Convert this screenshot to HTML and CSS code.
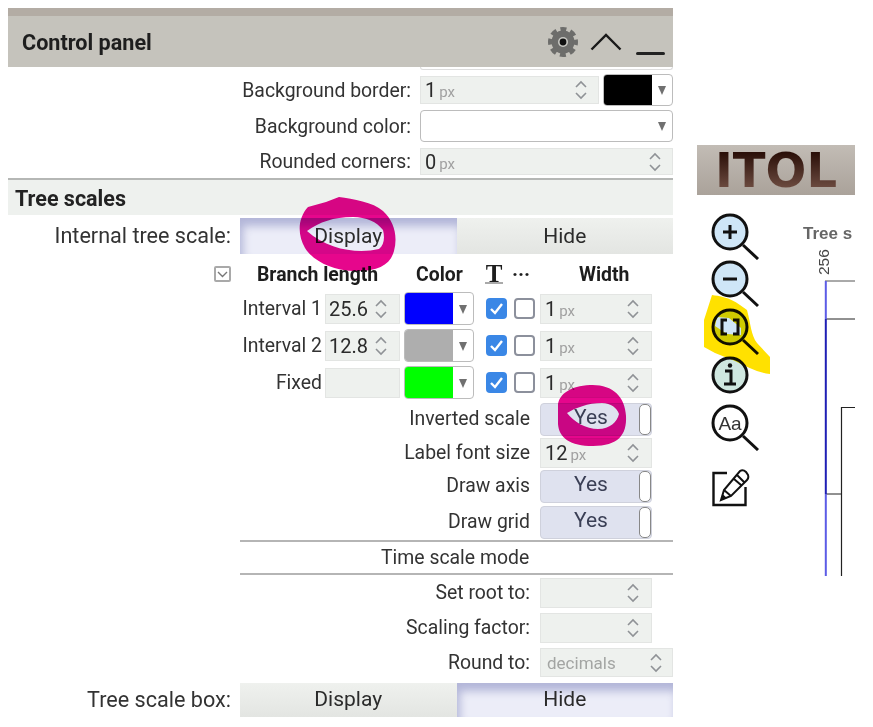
FILE: index.html
```html
<!DOCTYPE html>
<html lang="en">
<head>
<meta charset="utf-8">
<title>Control panel</title>
<link rel="stylesheet" href="styles.css">
</head>
<body>
<svg class="defs" width="0" height="0" aria-hidden="true">
  <symbol id="spin" viewBox="0 0 14 24"><path d="M2 9 L7 4 L12 9 M2 15 L7 20 L12 15" fill="none" stroke="#8f9296" stroke-width="1.6"/></symbol>
  <symbol id="tick" viewBox="0 0 21 21"><path d="M5 11 L9 15 L16 6" fill="none" stroke="#fff" stroke-width="2.4"/></symbol>
</svg>
<div class="page">
  <main class="panel">
    <header class="panel-head">
      <h1 class="panel-title">Control panel</h1>
      <div class="head-tools">
        <svg class="gear" width="32" height="32" viewBox="0 0 32 32"><circle cx="16" cy="16" r="11.500" fill="#6d6d6b"/><circle cx="16" cy="16" r="12.500" fill="none" stroke="#6d6d6b" stroke-width="5" stroke-dasharray="5.8 4.02" stroke-dashoffset="2.900"/><circle cx="16" cy="16" r="5" fill="#c9c9c4"/><circle cx="16" cy="16" r="3.400" fill="#111"/></svg>
        <svg class="caret" width="32" height="18" viewBox="0 0 32 18"><path d="M1.500 16.500 L16 2 L30.500 16.500" fill="none" stroke="#1a1a1a" stroke-width="2.400"/></svg>
        <span class="minimize"></span>
      </div>
    </header>
    <div class="clipped"></div>

    <div class="row r-border">
      <label class="lab lab-wide">Background border:</label>
      <div class="field f-border"><span class="val">1<small>px</small></span><svg class="spin"><use href="#spin"/></svg></div>
      <div class="swatch sw-top"><span class="chip chip-black"></span></div>
    </div>
    <div class="row r-bgcolor">
      <label class="lab lab-wide">Background color:</label>
      <div class="swatch sw-full"></div>
    </div>
    <div class="row r-rounded">
      <label class="lab lab-wide">Rounded corners:</label>
      <div class="field f-full"><span class="val">0<small>px</small></span><svg class="spin"><use href="#spin"/></svg></div>
    </div>

    <h2 class="section">Tree scales</h2>

    <div class="row r-seg r-seg-top">
      <label class="lab lab-big">Internal tree scale:</label>
      <div class="seg">
        <span class="seg-btn on">Display</span>
        <span class="seg-btn">Hide</span>
      </div>
    </div>

    <div class="row r-heads">
      <span class="collapse"><svg width="11" height="7" viewBox="0 0 11 7"><path d="M1 1 L5.500 5.500 L10 1" fill="none" stroke="#777" stroke-width="1.400"/></svg></span>
      <span class="hd hd-branch">Branch length</span>
      <span class="hd hd-color">Color</span>
      <span class="hd-t">T</span>
      <span class="hd-dots">···</span>
      <span class="hd hd-width">Width</span>
    </div>

    <div class="row r-int">
      <label class="lab lab-int">Interval 1</label>
      <div class="field f-int"><span class="val">25.6</span><svg class="spin"><use href="#spin"/></svg></div>
      <div class="swatch sw-int"><span class="chip chip-blue"></span></div>
      <span class="check on"><svg width="21" height="21"><use href="#tick"/></svg></span>
      <span class="check"></span>
      <div class="field f-width"><span class="val">1<small>px</small></span><svg class="spin"><use href="#spin"/></svg></div>
    </div>
    <div class="row r-int">
      <label class="lab lab-int">Interval 2</label>
      <div class="field f-int"><span class="val">12.8</span><svg class="spin"><use href="#spin"/></svg></div>
      <div class="swatch sw-int"><span class="chip chip-gray"></span></div>
      <span class="check on"><svg width="21" height="21"><use href="#tick"/></svg></span>
      <span class="check"></span>
      <div class="field f-width"><span class="val">1<small>px</small></span><svg class="spin"><use href="#spin"/></svg></div>
    </div>
    <div class="row r-int">
      <label class="lab lab-int">Fixed</label>
      <div class="field f-int"></div>
      <div class="swatch sw-int"><span class="chip chip-green"></span></div>
      <span class="check on"><svg width="21" height="21"><use href="#tick"/></svg></span>
      <span class="check"></span>
      <div class="field f-width"><span class="val">1<small>px</small></span><svg class="spin"><use href="#spin"/></svg></div>
    </div>

    <div class="row r-tog">
      <label class="lab lab-mid">Inverted scale</label>
      <div class="toggle"><span class="toggle-text">Yes</span><span class="knob"></span></div>
    </div>
    <div class="row r-font">
      <label class="lab lab-mid">Label font size</label>
      <div class="field f-width"><span class="val">12<small>px</small></span><svg class="spin"><use href="#spin"/></svg></div>
    </div>
    <div class="row r-tog r-tog-next">
      <label class="lab lab-mid">Draw axis</label>
      <div class="toggle"><span class="toggle-text">Yes</span><span class="knob"></span></div>
    </div>
    <div class="row r-tog r-tog-next">
      <label class="lab lab-mid">Draw grid</label>
      <div class="toggle"><span class="toggle-text">Yes</span><span class="knob"></span></div>
    </div>

    <div class="subhead"><span>Time scale mode</span></div>

    <div class="row r-time r-root">
      <label class="lab lab-mid">Set root to:</label>
      <div class="field f-width"><span class="val"></span><svg class="spin"><use href="#spin"/></svg></div>
    </div>
    <div class="row r-time r-scale">
      <label class="lab lab-mid">Scaling factor:</label>
      <div class="field f-width"><span class="val"></span><svg class="spin"><use href="#spin"/></svg></div>
    </div>
    <div class="row r-time r-round">
      <label class="lab lab-mid">Round to:</label>
      <div class="field f-round"><span class="val val-ph">decimals</span><svg class="spin"><use href="#spin"/></svg></div>
    </div>

    <div class="row r-seg r-seg-box">
      <label class="lab lab-big">Tree scale box:</label>
      <div class="seg">
        <span class="seg-btn">Display</span>
        <span class="seg-btn on">Hide</span>
      </div>
    </div>

    <svg class="scribble" width="665" height="708" viewBox="0 0 665 708" aria-hidden="true">
      <path fill-rule="evenodd" fill="#e6068c" d="M331 189 C345 191 365 194 375 203 C386 213 390 228 386 243 C382 258 368 264 345 263 C325 262 306 254 297 240 C289 226 290 210 300 199 L318 194 Z M299 223 C312 214 325 209 345 209 C358 209 369 214 375 222 C377 230 376 237 371 241 C350 246 320 242 299 223 Z"/>
      <path fill-rule="evenodd" fill="#e6068c" d="M550 396 C552 386 562 378 582 377 C604 376 617 388 618 408 C619 427 610 438 585 438 C562 438 551 430 550 416 Z M559 405 C567 400 580 395 594 395 C603 395 609 400 611 406 C609 414 602 421 590 421 C578 421 566 414 559 405 Z"/>
    </svg>
  </main>

  <aside class="side">
    <div class="logo"><span class="logo-text">ITOL</span></div>
    <div class="tools">
      <div class="icons">
        <svg class="ico ico-zoom" width="50" height="47" viewBox="0 0 50 47"><path d="M33 32 L48 46" stroke="#111" stroke-width="3"/><circle cx="20" cy="19" r="17" fill="#cfe6f7" stroke="#111" stroke-width="3"/><path d="M13 19 H27 M20 12 V26" stroke="#111" stroke-width="3"/></svg>
        <svg class="ico ico-zoom" width="50" height="48" viewBox="0 0 50 48"><path d="M33 32 L48 46" stroke="#111" stroke-width="3"/><circle cx="20" cy="19" r="17" fill="#cfe6f7" stroke="#111" stroke-width="3"/><path d="M13 19 H27" stroke="#111" stroke-width="3"/></svg>
        <svg class="ico ico-zoom" width="50" height="48" viewBox="0 0 50 48"><path d="M33 32 L48 46" stroke="#111" stroke-width="3"/><circle cx="20" cy="19" r="17" fill="#cfe6f7" stroke="#111" stroke-width="3"/><path d="M17 12 H12 V26 H17 M23 12 H28 V26 H23" fill="none" stroke="#111" stroke-width="3"/></svg>
        <svg class="ico ico-zoom" width="50" height="48" viewBox="0 0 50 48"><circle cx="20" cy="19" r="17" fill="#cfe7e0" stroke="#111" stroke-width="3"/><circle cx="20" cy="9.500" r="2.200" fill="#111"/><path d="M15 15 H21 V28 M14 28 H26" fill="none" stroke="#111" stroke-width="3"/></svg>
        <svg class="ico ico-zoom" width="50" height="47" viewBox="0 0 50 47"><path d="M33 32 L48 46" stroke="#111" stroke-width="3"/><circle cx="20" cy="19" r="17" fill="#fff" stroke="#111" stroke-width="3"/><text class="aa" x="20" y="25.500" text-anchor="middle">Aa</text></svg>
        <svg class="ico ico-edit" width="40" height="40" viewBox="0 0 40 40"><path d="M17 5 H3.500 V37 H35.500 V19" fill="none" stroke="#111" stroke-width="2.400"/><path d="M11 32 L14 22 L30 3 Q33 1 36 4 L38 7 Q39 10 37 12 L21 28 Z M14 22 L21 28 M27 7 L34 14 M24 11 L31 17" fill="#fff" stroke="#111" stroke-width="2"/><path d="M11 32 L12.500 26 L17 30 Z" fill="#111"/></svg>
        <svg class="marker" width="70" height="80" viewBox="0 0 70 80" aria-hidden="true"><path fill="#ffe100" fill-rule="evenodd" d="M15 0 C22 1 32 2 43 10 L50 15 C54 30 54 40 60 48 L73 62 L73 79 C62 78 50 72 38 66 L18 58 L7 52 L7 25 Z M18 31 L30 39 L44 40 L44 33 L32 23 L20 22 Z"/></svg>
      </div>
      <svg class="tree" width="52" height="363" viewBox="0 0 52 363">
        <text class="tree-title" x="0" y="26">Tree s</text>
        <text class="tree-num" transform="translate(26 62) rotate(-90)">256</text>
        <path d="M22 68 H52" stroke="#555" stroke-width="1" fill="none"/>
        <path d="M22 106 H52" stroke="#222" stroke-width="1" fill="none"/>
        <path d="M22 281 H38" stroke="#222" stroke-width="1" fill="none"/>
        <path d="M38.500 363 V194.500 H52" stroke="#222" stroke-width="1.200" fill="none"/>
        <path d="M22.800 68 V106 M22.800 281 V363" stroke="#5c5ce6" stroke-width="2" fill="none"/>
        <path d="M22.800 106 V281" stroke="#1f1fb5" stroke-width="2" fill="none"/>
      </svg>
    </div>
  </aside>
</div>
</body>
</html>
```
FILE: styles.css
```css
* { box-sizing: border-box; }
html, body { height: 100%; }
body {
  margin: 8px 8px 0;
  overflow: hidden;
  background: #fff;
  color: #333;
  font-family: Roboto, "Liberation Sans", sans-serif;
  font-size: 19.4px;
}
.defs { position: absolute; }
.page { display: flex; gap: 24px; align-items: flex-start; }

/* panel */
.panel { position: relative; width: 665px; flex: none; }
.panel-head {
  height: 59px;
  display: flex;
  align-items: center;
  padding: 9px 8px 0 14px;
  background: linear-gradient(#b3aca4 0, #b3aca4 8px, #c5c3bc 8px);
}
.panel-title { margin: 0; font-size: 21.600px; font-weight: 700; color: #1e1e1e; }
.head-tools { margin-left: auto; margin-top: -1px; display: flex; align-items: center; }
.gear { margin-right: 11px; }
.caret { margin-right: 14px; }
.minimize { width: 29px; height: 3px; margin-top: 24px; background: #222; border-radius: 2px; }
.clipped { height: 3px; margin-left: 412px; border: 1px solid #ddd; border-top: 0; border-radius: 0 0 4px 4px; }

.row { display: flex; align-items: center; }
.lab { flex: none; text-align: right; white-space: nowrap; }
.lab-wide { width: 403px; margin-right: 9px; }
.lab-big { width: 223px; margin-right: 9px; font-size: 21.600px; padding-bottom: 2px; }
.lab-mid { width: 522px; margin-right: 10px; }
.lab-int { width: 82px; margin-left: 232px; margin-right: 3px; }

.r-border { height: 32px; margin-top: 4px; }
.r-bgcolor { height: 32px; margin-top: 4px; }
.r-rounded { height: 27px; margin-top: 6px; }

.field {
  height: 100%;
  display: flex;
  align-items: center;
  justify-content: space-between;
  padding: 0 10px 0 4px;
  background: #eef1ee;
  border: 1px solid #e3e5e3;
  flex: none;
}
.val { font-size: 20px; color: #2b2b2b; white-space: nowrap; }
.val small { font-size: 15px; color: #a0a0a0; margin-left: 3px; }
.val-ph { font-size: 17px; color: #a3a5a3; padding-left: 2px; }
.spin { width: 14px; height: 24px; flex: none; }
.f-border { width: 179px; height: 28px; margin-right: 4px; }
.f-full { width: 253px; }
.f-int { width: 75px; height: 30px; margin-right: 4px; padding-right: 11px; padding-left: 3px; }
.f-width { width: 112px; height: 30px; padding-right: 11px; }
.f-round { width: 133px; height: 29px; padding-right: 9px; }

.swatch {
  position: relative;
  height: 100%;
  background: #fff;
  border: 1px solid #bcbcbc;
  border-radius: 4px;
  overflow: hidden;
  flex: none;
}
.swatch::after {
  content: "";
  position: absolute;
  right: 6px;
  top: 50%;
  margin-top: -4px;
  border: 4.500px solid transparent;
  border-top: 9px solid #707070;
  border-bottom: 0;
}
.sw-top { width: 70px; }
.sw-full { width: 253px; }
.sw-int { width: 70px; margin-right: 12px; }
.chip { display: block; width: 48px; height: 100%; }
.chip-black { background: #000; }
.chip-blue { background: #0000ff; }
.chip-gray { background: #aeaeae; }
.chip-green { background: #00ff00; }

.section {
  height: 37px;
  margin: 3px 0 0;
  padding: 6px 0 0 7px;
  font-size: 21.500px;
  font-weight: 700;
  color: #222;
  background: #eef1ee;
  border-top: 2px solid #b5b7b5;
}

.r-seg { height: 36px; }
.r-seg-top { margin-top: 3px; }
.r-seg-box { height: 34px; margin-top: 6px; }
.seg { display: flex; width: 433px; height: 100%; }
.seg-btn {
  width: 50%;
  display: flex;
  align-items: center;
  justify-content: center;
  font-size: 21px;
  color: #2b2b2b;
  background: linear-gradient(#eff1ee 0, #e3e5e2 100%);
}
.r-seg-box .seg-btn { padding-bottom: 3px; }
.seg-btn.on {
  background: #ecedf8;
  box-shadow: inset 3px 8px 9px rgba(140, 145, 195, .6);
}

.r-heads { height: 18px; margin-top: 11px; font-weight: 700; color: #1d1d1d; }
.collapse {
  width: 17px;
  height: 16px;
  margin-left: 206px;
  display: flex;
  align-items: center;
  justify-content: center;
  border: 2px solid #a9a9a9;
  border-radius: 2px;
}
.hd { text-align: center; white-space: nowrap; }
.hd-branch { width: 121px; margin-left: 26px; }
.hd-color { width: 46px; margin-left: 38px; }
.hd-t {
  width: 18px;
  height: 19px;
  margin-left: 23px;
  font-family: "Liberation Serif", serif;
  font-size: 25px;
  font-weight: 700;
  line-height: 17px;
  text-align: center;
  border-bottom: 2px solid #aaa;
}
.hd-dots { width: 16px; margin-left: 9px; font-size: 20px; line-height: 18px; text-align: center; }
.hd-width { width: 50px; margin-left: 51px; }

.r-int { height: 33px; margin-top: 4px; }
.r-heads + .r-int { margin-top: 9px; }
.check {
  width: 21px;
  height: 21px;
  margin-right: 7px;
  flex: none;
  border: 2.500px solid #8c909c;
  border-radius: 4px;
  background: #fff;
}
.check.on { border: 0; background: #3a87e6; }
.check svg { display: block; }
.check + .field { margin-left: -2px; }

.r-tog { height: 33px; margin-top: 4px; }
.r-tog-next { margin-top: 3px; }
.r-tog .lab { padding-bottom: 2px; }
.r-font { height: 29px; margin-top: 2px; }
.toggle {
  position: relative;
  width: 112px;
  height: 100%;
  display: flex;
  align-items: center;
  padding-bottom: 5px;
  border: 1px solid #cfd1dc;
  border-radius: 4px;
  background: #dfe2ef;
}
.toggle-text { width: 100px; text-align: center; font-size: 21px; color: #3a3f55; }
.knob {
  position: absolute;
  right: 0;
  top: 0;
  bottom: 0;
  width: 12px;
  background: #fff;
  border: 1px solid #888;
  border-radius: 5px;
}

.subhead {
  height: 35px;
  margin: 1px 0 0 232px;
  display: flex;
  align-items: center;
  padding-left: 141px;
  border-top: 2px solid #b5b5b5;
  border-bottom: 2px solid #b5b5b5;
}
.r-time { height: 31px; }
.r-root { margin-top: 2px; }
.r-scale { margin-top: 4px; }
.r-round { height: 29px; margin-top: 5px; }

.scribble {
  position: absolute;
  left: 0;
  top: 0;
  pointer-events: none;
  mix-blend-mode: multiply;
}

/* sidebar */
.side { width: 158px; flex: none; margin-top: 137px; }
.logo {
  height: 50px;
  display: flex;
  align-items: center;
  justify-content: center;
  background: linear-gradient(#c2bcb5, #aaa29a);
}
.logo-text {
  font-family: "DejaVu Sans", sans-serif;
  font-size: 48px;
  font-weight: 700;
  line-height: 50px;
  background: linear-gradient(#2a0f08 15%, #6b4a3f 85%);
  -webkit-background-clip: text;
  background-clip: text;
  color: transparent;
}
.tools { display: flex; margin-top: 18px; }
.icons {
  position: relative;
  width: 50px;
  margin-left: 13px;
  display: flex;
  flex-direction: column;
  flex: none;
}
.ico { display: block; flex: none; }
.ico-edit { margin-top: 17px; }
.aa { font-family: "Liberation Sans", sans-serif; font-size: 19px; fill: #333; }
.marker {
  position: absolute;
  left: -13px;
  top: 82px;
  overflow: visible;
  mix-blend-mode: multiply;
  pointer-events: none;
}
.tree { display: block; margin-left: 43px; flex: none; }
.tree-title { font-family: "Liberation Sans", sans-serif; font-size: 17px; font-weight: 700; fill: #666; }
.tree-num { font-family: "Liberation Sans", sans-serif; font-size: 15.500px; fill: #444; }
```
